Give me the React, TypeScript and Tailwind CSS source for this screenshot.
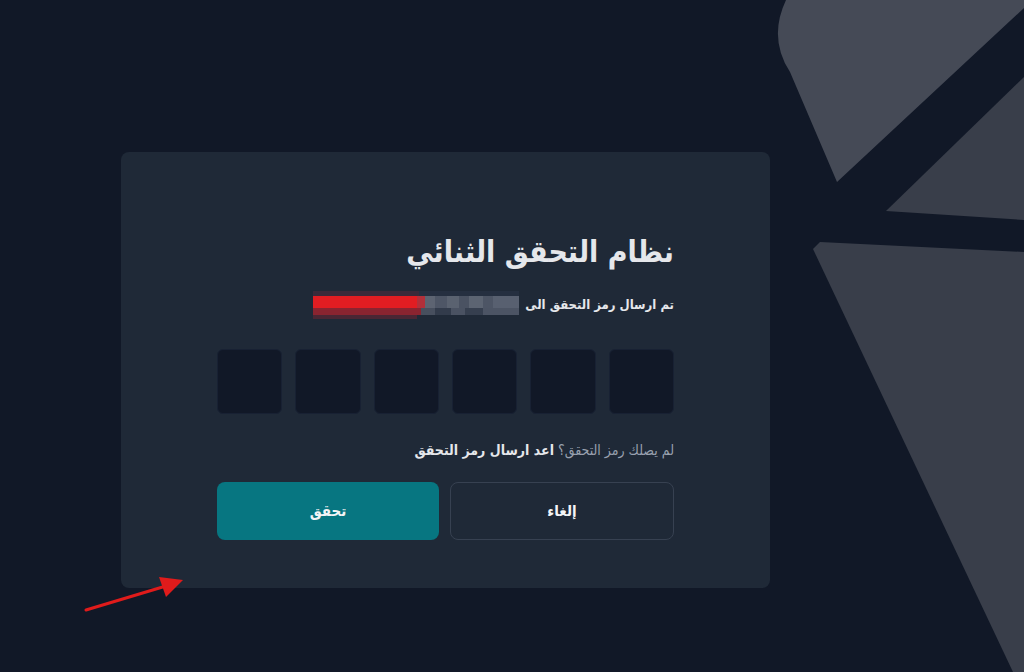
import { useState } from "react";

const font = { fontFamily: '"DejaVu Sans Condensed", "DejaVu Sans", "Noto Sans", sans-serif' };

function Backdrop() {
  return (
    <svg
      className="pointer-events-none absolute inset-0 h-full w-full"
      viewBox="0 0 1024 672"
      preserveAspectRatio="none"
    >
      <path
        d="M786 0 L1024 0 L1024 8 L837 182 L790 72 Q768 38 786 0 Z"
        fill="#454a56"
      />
      <path d="M886 211 L1024 77 L1024 220 Z" fill="#393e4a" />
      <path d="M813 249 L820 242 L1024 252 L1024 672 L1013 672 Z" fill="#393e4a" />
    </svg>
  );
}

// pixelated redaction over the email address
function MaskedEmail() {
  return (
    <div className="flex h-[28px] w-[206px] flex-col blur-[0.6px]" dir="ltr">
      <div className="flex h-[5px]">
        <div className="w-[106px] bg-[#3a2a3a]" />
        <div className="flex-1 bg-[#252f40]" />
      </div>
      <div className="flex h-[12px]">
        <div className="w-[104px] bg-[#e11d22]" />
        <div className="w-[8px] bg-[#b2303a]" />
        <div className="w-[10px] bg-[#5d6472]" />
        <div className="w-[12px] bg-[#4e5666]" />
        <div className="w-[12px] bg-[#5a6270]" />
        <div className="w-[10px] bg-[#4a5262]" />
        <div className="w-[14px] bg-[#5c6472]" />
        <div className="w-[10px] bg-[#4d5565]" />
        <div className="flex-1 bg-[#586070]" />
      </div>
      <div className="flex h-[7px]">
        <div className="w-[108px] bg-[#8a2430]" />
        <div className="w-[14px] bg-[#474f5e]" />
        <div className="w-[16px] bg-[#323b4b]" />
        <div className="w-[14px] bg-[#4a5262]" />
        <div className="w-[18px] bg-[#363f4f]" />
        <div className="flex-1 bg-[#4c5464]" />
      </div>
      <div className="flex h-[4px]">
        <div className="w-[104px] bg-[#4a2634]" />
        <div className="flex-1" />
      </div>
    </div>
  );
}

function CodeInputs() {
  const [digits, setDigits] = useState(["", "", "", "", "", ""]);
  return (
    <div className="flex gap-[13px]" dir="ltr">
      {digits.map((d, i) => (
        <input
          key={i}
          value={d}
          maxLength={1}
          onChange={(e) => {
            const next = [...digits];
            next[i] = e.target.value;
            setDigits(next);
          }}
          className="h-[65px] w-[65px] flex-1 rounded-md border border-[#182133] bg-[#111827] text-center text-2xl text-gray-100 focus:outline-none"
        />
      ))}
    </div>
  );
}

export default function App() {
  return (
    <div className="relative min-h-[672px] overflow-hidden bg-[#111827]" style={font}>
      <Backdrop />

      <div className="relative flex pl-[121px] pt-[152px]">
        <div
          dir="rtl"
          className="flex w-[649px] flex-col rounded-lg bg-[#1f2937] px-[96px] pb-[48px] pt-[78px]"
        >
          <h1 className="text-[30px] font-bold leading-[44px] text-gray-200">
            نظام التحقق الثنائي
          </h1>
          <div className="mt-[17px] flex items-center gap-[6px]">
            <span className="text-[13px] font-semibold text-gray-200">تم ارسال رمز التحقق الى</span>
            <MaskedEmail />
          </div>

          <div className="mt-[30px]">
            <CodeInputs />
          </div>

          <p className="mt-[26px] overflow-hidden text-[14px] leading-[20px] text-gray-400">
            لم يصلك رمز التحقق؟{" "}
            <span className="font-bold text-gray-200">اعد ارسال رمز التحقق</span>
          </p>

          <div className="mt-[22px] flex gap-[11px]">
            <button
              type="button"
              className="h-[58px] flex-1 rounded-lg border border-[#374151] text-[15px] font-bold text-gray-100"
            >
              إلغاء
            </button>
            <button
              type="button"
              className="h-[58px] flex-1 rounded-lg bg-[#077681] text-[15px] font-bold text-gray-100"
            >
              تحقق
            </button>
          </div>
        </div>
      </div>

      {/* annotation arrow */}
      <svg className="pointer-events-none absolute left-0 top-0" width="200" height="640">
        <line x1="86" y1="610" x2="166" y2="586" stroke="#e01b1b" strokeWidth="3" strokeLinecap="round" />
        <path d="M183 580 L159 577 L166 597 Z" fill="#e01b1b" />
      </svg>
    </div>
  );
}
